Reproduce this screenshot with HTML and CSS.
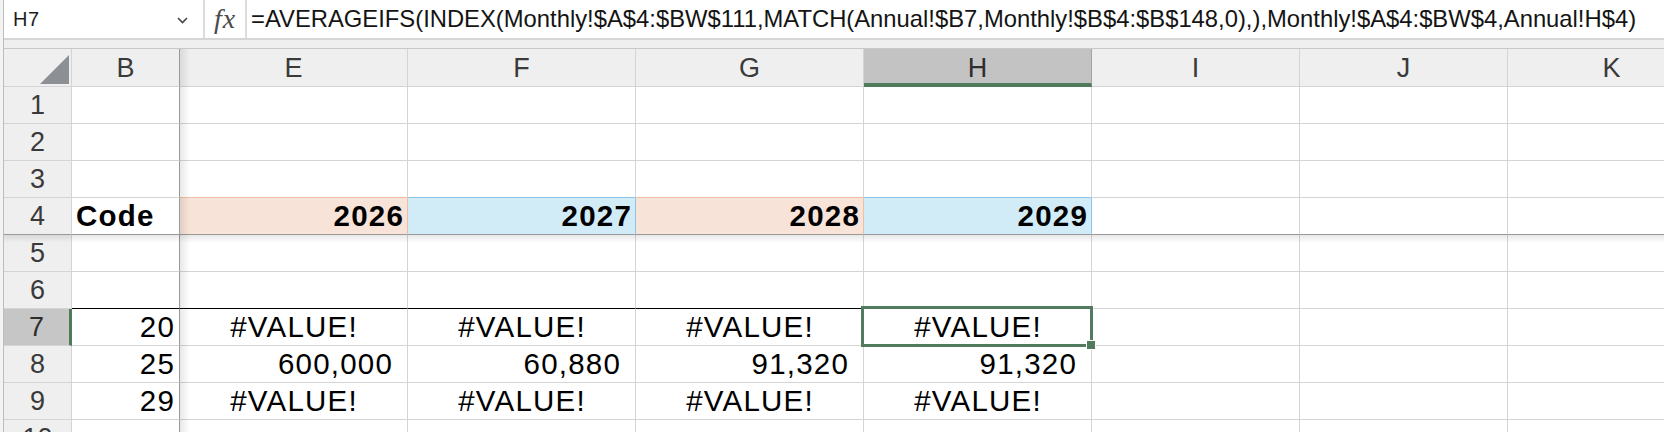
FILE: index.html
```html
<!DOCTYPE html>
<html lang="en">
<head>
<meta charset="utf-8">
<title>Spreadsheet</title>
<link rel="stylesheet" href="styles.css">
</head>
<body>
<div class="app">
  <div class="formula-bar">
    <div class="namebox">
      <span class="name">H7</span>
      <svg class="chev" width="11" height="7" viewBox="0 0 11 7"><polyline points="1,1 5.5,5.5 10,1" fill="none" stroke="#444" stroke-width="1.6"/></svg>
    </div>
    <div class="fx">fx</div>
    <div class="formula">=AVERAGEIFS(INDEX(Monthly!$A$4:$BW$111,MATCH(Annual!$B7,Monthly!$B$4:$B$148,0),),Monthly!$A$4:$BW$4,Annual!H$4)</div>
  </div>
  <div class="strip"></div>
  <div class="sheet">
    <div class="c ch corner"><svg width="29" height="29" viewBox="0 0 29 29"><polygon points="29,0 29,29 0,29" fill="#8c9095"/></svg></div>
    <div class="c ch fzc">B</div>
    <div class="c ch">E</div>
    <div class="c ch">F</div>
    <div class="c ch">G</div>
    <div class="c ch sel">H</div>
    <div class="c ch">I</div>
    <div class="c ch">J</div>
    <div class="c ch">K</div>

    <div class="c rh">1</div>
    <div class="c fzc"></div><div class="c"></div><div class="c"></div><div class="c"></div><div class="c"></div><div class="c"></div><div class="c"></div><div class="c"></div>

    <div class="c rh">2</div>
    <div class="c fzc"></div><div class="c"></div><div class="c"></div><div class="c"></div><div class="c"></div><div class="c"></div><div class="c"></div><div class="c"></div>

    <div class="c rh">3</div>
    <div class="c fzc"></div><div class="c peach-t"></div><div class="c blue-t"></div><div class="c peach-t"></div><div class="c blue-t"></div><div class="c"></div><div class="c"></div><div class="c"></div>

    <div class="c rh fzr">4</div>
    <div class="c fzc fzr code">Code</div>
    <div class="c fzr yr peach">2026</div>
    <div class="c fzr yr blue">2027</div>
    <div class="c fzr yr peach">2028</div>
    <div class="c fzr yr blue">2029</div>
    <div class="c fzr"></div><div class="c fzr"></div><div class="c fzr"></div>

    <div class="c rh">5</div>
    <div class="c fzc"></div><div class="c"></div><div class="c"></div><div class="c"></div><div class="c"></div><div class="c"></div><div class="c"></div><div class="c"></div>

    <div class="c rh">6</div>
    <div class="c fzc blk"></div><div class="c blk"></div><div class="c blk"></div><div class="c blk"></div><div class="c blk"></div><div class="c"></div><div class="c"></div><div class="c"></div>

    <div class="c rh sel">7</div>
    <div class="c fzc num">20</div>
    <div class="c err">#VALUE!</div>
    <div class="c err">#VALUE!</div>
    <div class="c err">#VALUE!</div>
    <div class="c err active">#VALUE!</div>
    <div class="c"></div><div class="c"></div><div class="c"></div>

    <div class="c rh">8</div>
    <div class="c fzc num">25</div>
    <div class="c acct">600,000</div>
    <div class="c acct">60,880</div>
    <div class="c acct">91,320</div>
    <div class="c acct">91,320</div>
    <div class="c"></div><div class="c"></div><div class="c"></div>

    <div class="c rh">9</div>
    <div class="c fzc num">29</div>
    <div class="c err">#VALUE!</div>
    <div class="c err">#VALUE!</div>
    <div class="c err">#VALUE!</div>
    <div class="c err">#VALUE!</div>
    <div class="c"></div><div class="c"></div><div class="c"></div>

    <div class="c rh">10</div>
    <div class="c fzc"></div><div class="c"></div><div class="c"></div><div class="c"></div><div class="c"></div><div class="c"></div><div class="c"></div><div class="c"></div>

    <div class="shadow-v"></div>
    <div class="shadow-h"></div>
  </div>
</div>
</body>
</html>
```

FILE: styles.css
```css
html, body {
  margin: 0;
  padding: 0;
}
body {
  width: 1664px;
  height: 432px;
  overflow: hidden;
  background: #f3f3f3;
  font-family: "Liberation Sans", Arial, sans-serif;
}
.app {
  margin-left: 3px;
  border-left: 1px solid #bcbcbc;
  background: #fff;
  height: 432px;
  overflow: hidden;
}

/* formula bar */
.formula-bar {
  display: flex;
  height: 38px;
  border-bottom: 2px solid #d5d5d5;
  background: #fff;
}
.namebox {
  box-sizing: border-box;
  width: 201px;
  flex: none;
  display: flex;
  align-items: center;
  justify-content: space-between;
  padding: 0 15px 0 9px;
  border-right: 2px solid #dcdcdc;
}
.name {
  font-size: 20px;
  line-height: 38px;
  color: #1e1e1e;
  letter-spacing: 0.5px;
}
.chev {
  display: block;
  margin-top: 2px;
}
.fx {
  box-sizing: border-box;
  width: 42px;
  flex: none;
  border-right: 2px solid #dcdcdc;
  text-align: center;
  font-family: "Liberation Serif", "Times New Roman", serif;
  font-style: italic;
  font-size: 28px;
  line-height: 38px;
  color: #4a4a4a;
  letter-spacing: 1px;
}
.formula {
  flex: 1;
  padding-left: 4px;
  white-space: nowrap;
  font-size: 23.8px;
  line-height: 38px;
  color: #141414;
}
.strip {
  height: 8px;
  background: #efefef;
  border-bottom: 1px solid #c8c8c8;
}

/* sheet grid */
.sheet {
  position: relative;
  display: grid;
  grid-template-columns: 68px 108px repeat(4, 228px) repeat(3, 208px);
  grid-template-rows: 38px repeat(10, 37px);
}
.c {
  box-sizing: border-box;
  border-right: 1px solid #d4d4d4;
  border-bottom: 1px solid #d4d4d4;
  font-size: 29.5px;
  letter-spacing: 1.2px;
  line-height: 36px;
  white-space: nowrap;
  color: #000;
  padding: 0 5px;
  min-width: 0;
}
.ch {
  background: #efefef;
  color: #3a3a3a;
  font-size: 27px;
  letter-spacing: 0;
  text-align: center;
  line-height: 35px;
  padding-top: 2px;
}
.ch.sel {
  background: #c3c3c3;
  border-bottom: 4px solid #4f7a5c;
  border-right-color: #a3a3a3;
  color: #2e2e2e;
}
.corner {
  display: flex;
  justify-content: flex-end;
  align-items: flex-end;
  padding: 0 2px 2px 0;
}
.corner svg {
  display: block;
}
.rh {
  background: #efefef;
  color: #3a3a3a;
  font-size: 27px;
  letter-spacing: 0;
  text-align: center;
  line-height: 35px;
  padding: 1px 0 0;
}
.rh.sel {
  background: #c6c6c6;
  border-right: 3px solid #4f7a5c;
  color: #2e2e2e;
}

/* freeze panes */
.fzc {
  border-right-color: #999;
}
.fzr {
  border-bottom-color: #999;
}
.shadow-v {
  position: absolute;
  left: 176px;
  top: 0;
  bottom: 0;
  width: 10px;
  background: linear-gradient(to right, rgba(0, 0, 0, 0.09), rgba(0, 0, 0, 0));
  pointer-events: none;
  z-index: 2;
}
.shadow-h {
  position: absolute;
  left: 0;
  right: 0;
  top: 186px;
  height: 8px;
  background: linear-gradient(to bottom, rgba(0, 0, 0, 0.09), rgba(0, 0, 0, 0));
  pointer-events: none;
  z-index: 2;
}

/* cell formats */
.code {
  font-weight: bold;
  padding-left: 4px;
}
.yr {
  font-weight: bold;
  text-align: right;
  padding-right: 3px;
}
.num {
  text-align: right;
  padding-right: 4px;
}
.acct {
  text-align: right;
  padding-right: 14px;
}
.err {
  text-align: center;
  padding-left: 6px;
}
.peach {
  background: #f8e3d8;
  border-right-color: #efbea4;
}
.blue {
  background: #d1ebf7;
  border-right-color: #8ec5ea;
}
.peach-t {
  border-bottom-color: #efbea4;
}
.blue-t {
  border-bottom-color: #8ec5ea;
}
.blk {
  border-bottom-color: #000;
}

/* active cell */
.active {
  position: relative;
}
.active::after {
  content: "";
  position: absolute;
  left: -3px;
  top: -3px;
  right: -2px;
  bottom: -2px;
  border: 3px solid #517a5e;
  z-index: 3;
  pointer-events: none;
}
.active::before {
  content: "";
  position: absolute;
  right: -5px;
  bottom: -5px;
  width: 8px;
  height: 8px;
  background: #517a5e;
  border: 1px solid #fff;
  z-index: 4;
}
```
